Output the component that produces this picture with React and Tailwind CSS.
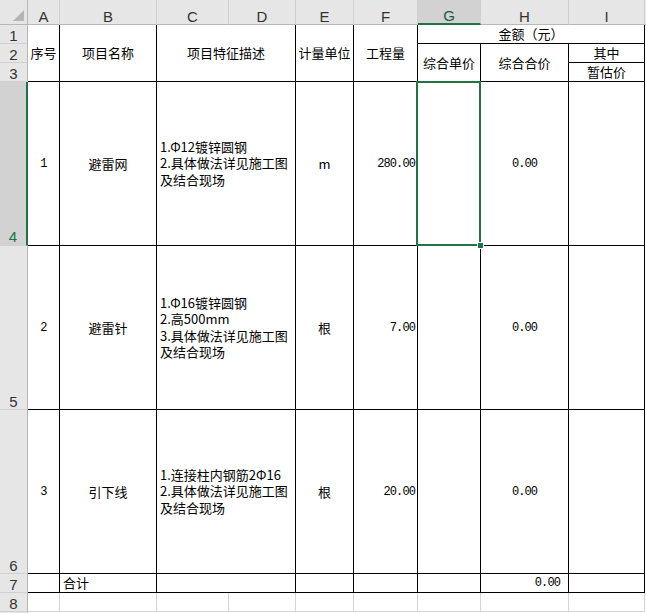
import React from 'react';

// shared cell styles
const colHead = "flex items-end justify-center bg-[#e6e6e6] border-r border-b border-r-[#d0d0d0] border-b-[#b8b8b8] text-[15px] leading-none text-[#333] font-['Liberation_Sans',sans-serif]";
const rowHead = "flex items-end justify-center bg-[#e6e6e6] border-r border-b border-r-[#b8b8b8] border-b-[#d0d0d0] text-[15px] leading-none text-[#333] font-['Liberation_Sans',sans-serif]";
const cell = "flex items-center justify-center border-r border-b border-black";
const blank = "border-r border-b border-[#d4d4d4]";
const num = "font-['Liberation_Mono',monospace] text-[12px] tracking-[-0.9px] text-black";

const rows = [
  {
    no: '1',
    name: '避雷网',
    desc: ['1.Φ12镀锌圆钢', '2.具体做法详见施工图', '及结合现场'],
    unit: 'm',
    qty: '280.00',
  },
  {
    no: '2',
    name: '避雷针',
    desc: ['1.Φ16镀锌圆钢', '2.高500mm', '3.具体做法详见施工图', '及结合现场'],
    unit: '根',
    qty: '7.00',
  },
  {
    no: '3',
    name: '引下线',
    desc: ['1.连接柱内钢筋2Φ16', '2.具体做法详见施工图', '及结合现场'],
    unit: '根',
    qty: '20.00',
  },
];

export default function App() {
  return (
    <div className="w-[646px] h-[613px] bg-white overflow-hidden text-[13px] text-black font-['Noto_Sans_CJK_SC',sans-serif]">
      <div className="grid h-full grid-cols-[28px_32px_97px_72px_67px_58px_64px_63px_88px_76px_1fr] grid-rows-[25px_19px_19px_19px_164px_164px_164px_19px_19px_1fr]">
        {/* Corner */}
        <div className="col-start-1 row-start-1 relative bg-[#e6e6e6] border-r border-b border-r-[#b8b8b8] border-b-[#b8b8b8]">
          <svg className="absolute right-[3px] bottom-[3px]" width="11" height="11" viewBox="0 0 11 11">
            <polygon points="11,0 11,11 0,11" fill="#b4b4b4" />
          </svg>
        </div>

        {/* Column headers */}
        <div className={`col-start-2 row-start-1 ${colHead}`}>A</div>
        <div className={`col-start-3 row-start-1 ${colHead}`}>B</div>
        <div className={`col-start-4 row-start-1 ${colHead}`}>C</div>
        <div className={`col-start-5 row-start-1 ${colHead}`}>D</div>
        <div className={`col-start-6 row-start-1 ${colHead}`}>E</div>
        <div className={`col-start-7 row-start-1 ${colHead}`}>F</div>
        <div className="col-start-8 row-start-1 flex items-end justify-center bg-[#d2d2d2] border-r border-r-[#d0d0d0] border-b-2 border-b-[#217346] text-[15px] leading-none text-[#1d5a38] font-['Liberation_Sans',sans-serif]">
          G
        </div>
        <div className={`col-start-9 row-start-1 ${colHead}`}>H</div>
        <div className={`col-start-10 row-start-1 ${colHead}`}>I</div>
        <div className="col-start-11 row-start-1 bg-[#e6e6e6] border-b border-b-[#b8b8b8]" />

        {/* Row headers */}
        <div className={`col-start-1 row-start-2 ${rowHead}`}>1</div>
        <div className={`col-start-1 row-start-3 ${rowHead}`}>2</div>
        <div className={`col-start-1 row-start-4 ${rowHead}`}>3</div>
        <div className="col-start-1 row-start-5 flex items-end justify-center pb-px bg-[#d2d2d2] border-r-2 border-r-[#217346] border-b border-b-[#d0d0d0] text-[15px] leading-none text-[#217346] font-['Liberation_Sans',sans-serif]">
          4
        </div>
        <div className={`col-start-1 row-start-6 ${rowHead}`}>5</div>
        <div className={`col-start-1 row-start-7 ${rowHead}`}>6</div>
        <div className={`col-start-1 row-start-8 ${rowHead}`}>7</div>
        <div className={`col-start-1 row-start-9 ${rowHead}`}>8</div>
        <div className="col-start-1 row-start-10 bg-[#e6e6e6] border-r border-r-[#b8b8b8]" />

        {/* Table header */}
        <div className={`col-start-2 row-start-2 row-span-3 ${cell}`}>序号</div>
        <div className={`col-start-3 row-start-2 row-span-3 ${cell}`}>项目名称</div>
        <div className={`col-start-4 col-span-2 row-start-2 row-span-3 ${cell}`}>项目特征描述</div>
        <div className={`col-start-6 row-start-2 row-span-3 ${cell}`}>计量单位</div>
        <div className={`col-start-7 row-start-2 row-span-3 ${cell}`}>工程量</div>
        <div className={`col-start-8 col-span-3 row-start-2 ${cell}`}>金额（元）</div>
        <div className={`col-start-8 row-start-3 row-span-2 ${cell}`}>综合单价</div>
        <div className={`col-start-9 row-start-3 row-span-2 ${cell}`}>综合合价</div>
        <div className={`col-start-10 row-start-3 ${cell}`}>其中</div>
        <div className={`col-start-10 row-start-4 ${cell}`}>暂估价</div>

        {/* Data rows */}
        {rows.map((r, i) => (
          <React.Fragment key={r.no}>
            <div className={cell} style={{ gridColumn: 2, gridRow: 5 + i }}>
              <span className={num}>{r.no}</span>
            </div>
            <div className={cell} style={{ gridColumn: 3, gridRow: 5 + i }}>
              {r.name}
            </div>
            <div
              className="flex flex-col justify-center pl-[3px] border-r border-b border-black leading-[16.5px]"
              style={{ gridColumn: '4 / span 2', gridRow: 5 + i }}
            >
              {r.desc.map((d) => (
                <div key={d} className="whitespace-nowrap h-[16.5px]">{d}</div>
              ))}
            </div>
            <div className={cell} style={{ gridColumn: 6, gridRow: 5 + i }}>
              {r.unit}
            </div>
            <div className={`${cell} justify-end! pr-[2px]`} style={{ gridColumn: 7, gridRow: 5 + i }}>
              <span className={num}>{r.qty}</span>
            </div>
            <div className={`relative ${cell}`} style={{ gridColumn: 8, gridRow: 5 + i }}>
              {i === 0 && (
                <div className="absolute left-[-2px] top-[-1px] right-[-1px] bottom-[-1px] z-10 border-2 border-[#217346]">
                  <div className="absolute right-[-5px] bottom-[-5px] w-[7px] h-[7px] bg-[#217346] border border-white" />
                </div>
              )}
            </div>
            <div className={cell} style={{ gridColumn: 9, gridRow: 5 + i }}>
              <span className={num}>0.00</span>
            </div>
            <div className={cell} style={{ gridColumn: 10, gridRow: 5 + i }} />
          </React.Fragment>
        ))}

        {/* Total row */}
        <div className={`col-start-2 row-start-8 ${cell}`} />
        <div className="col-start-3 row-start-8 flex items-center pl-[3px] border-r border-b border-black">合计</div>
        <div className={`col-start-4 col-span-2 row-start-8 ${cell}`} />
        <div className={`col-start-6 row-start-8 ${cell}`} />
        <div className={`col-start-7 row-start-8 ${cell}`} />
        <div className={`col-start-8 row-start-8 ${cell}`} />
        <div className="col-start-9 row-start-8 flex items-center justify-end pr-[8px] border-r border-b border-black">
          <span className={num}>0.00</span>
        </div>
        <div className={`col-start-10 row-start-8 ${cell}`} />

        {/* Empty row 8 */}
        <div className={`col-start-2 row-start-9 ${blank}`} />
        <div className={`col-start-3 row-start-9 ${blank}`} />
        <div className={`col-start-4 row-start-9 ${blank}`} />
        <div className={`col-start-5 row-start-9 ${blank}`} />
        <div className={`col-start-6 row-start-9 ${blank}`} />
        <div className={`col-start-7 row-start-9 ${blank}`} />
        <div className={`col-start-8 row-start-9 ${blank}`} />
        <div className={`col-start-9 row-start-9 ${blank}`} />
        <div className={`col-start-10 row-start-9 ${blank}`} />
      </div>
    </div>
  );
}
